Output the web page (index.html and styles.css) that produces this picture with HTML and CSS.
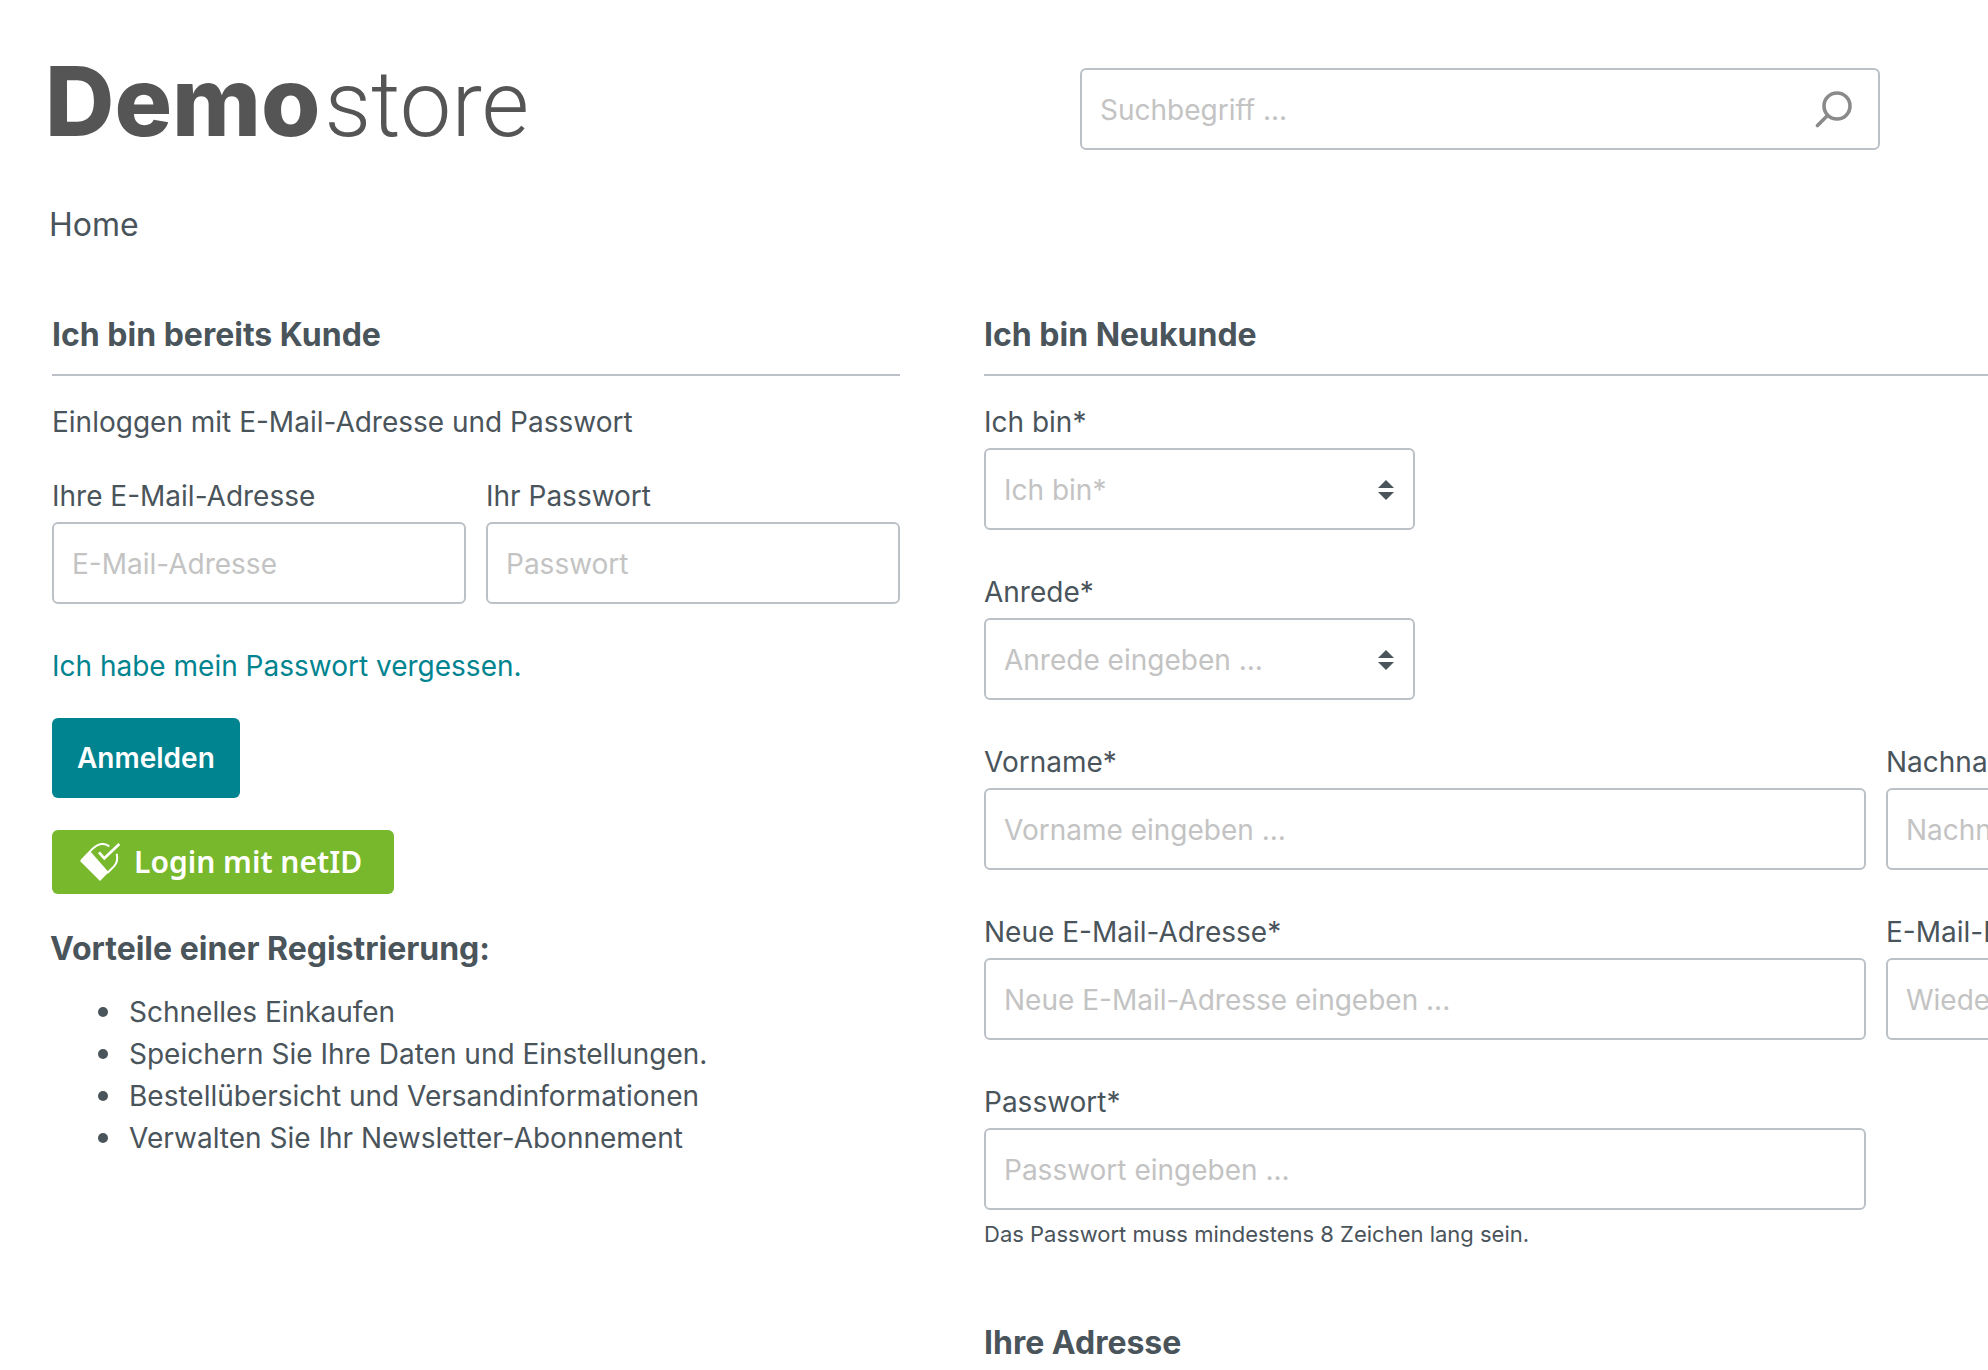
FILE: index.html
```html
<!DOCTYPE html>
<html lang="de">
<head>
<meta charset="utf-8">
<title>Demostore</title>
<link rel="stylesheet" href="styles.css">
</head>
<body>
<div class="page">
  <header class="header">
    <a class="logo" href="#" aria-label="Demostore"><span class="logo-strong">Demo</span><span class="logo-light">store</span></a>
    <form class="search" role="search">
      <input class="input" type="search" placeholder="Suchbegriff ..." aria-label="Suchbegriff">
      <button class="search-button" type="submit" aria-label="Suchen">
        <svg width="40" height="40" viewBox="0 0 40 40" fill="none" stroke="#8a8a8a" stroke-width="3.6" stroke-linecap="round"><circle cx="22" cy="16" r="13"/><path d="M12.5 25.5 2.5 35.5"/></svg>
      </button>
    </form>
  </header>
  <nav class="nav"><a href="#">Home</a></nav>
  <main class="content">
    <section>
      <h2 class="title">Ich bin bereits Kunde</h2>
      <form>
        <p class="intro">Einloggen mit E-Mail-Adresse und Passwort</p>
        <div class="row row-2">
          <div class="field">
            <label for="login-mail">Ihre E-Mail-Adresse</label>
            <input class="input" id="login-mail" type="email" placeholder="E-Mail-Adresse">
          </div>
          <div class="field">
            <label for="login-password">Ihr Passwort</label>
            <input class="input" id="login-password" type="password" placeholder="Passwort">
          </div>
        </div>
        <a class="forgot" href="#">Ich habe mein Passwort vergessen.</a>
        <button class="button" type="submit">Anmelden</button>
        <button class="netid" type="button">
          <svg width="40" height="38" viewBox="60 39 120 114" fill="none" stroke="#fff">
            <path fill="#fff" stroke="none" d="M60 93 90 63 146 127 120 153Z"/>
            <path stroke-width="6" d="M64 91 98 56Q124 32 148 49"/>
            <path stroke-width="6" d="M170 71Q176 94 162 109L142 129"/>
            <path stroke-width="8" d="M117 67 133 85 178 42"/>
          </svg>
          <span>Login mit netID</span>
        </button>
      </form>
      <h2 class="benefits-title">Vorteile einer Registrierung:</h2>
      <ul class="benefits">
        <li>Schnelles Einkaufen</li>
        <li>Speichern Sie Ihre Daten und Einstellungen.</li>
        <li>Bestellübersicht und Versandinformationen</li>
        <li>Verwalten Sie Ihr Newsletter-Abonnement</li>
      </ul>
    </section>
    <section>
      <h2 class="title">Ich bin Neukunde</h2>
      <form class="register">
        <div class="row row-4">
          <div class="field">
            <label for="account-type">Ich bin*</label>
            <div class="select">
              <select class="input" id="account-type"><option>Ich bin*</option></select>
              <svg class="arrows" width="16" height="20" viewBox="0 0 16 20" fill="#4a545b"><path d="M0 8 8 0 16 8ZM0 12H16L8 20Z"/></svg>
            </div>
          </div>
        </div>
        <div class="row row-4">
          <div class="field">
            <label for="salutation">Anrede*</label>
            <div class="select">
              <select class="input" id="salutation"><option>Anrede eingeben ...</option></select>
              <svg class="arrows" width="16" height="20" viewBox="0 0 16 20" fill="#4a545b"><path d="M0 8 8 0 16 8ZM0 12H16L8 20Z"/></svg>
            </div>
          </div>
        </div>
        <div class="row row-2">
          <div class="field">
            <label for="first-name">Vorname*</label>
            <input class="input" id="first-name" type="text" placeholder="Vorname eingeben ...">
          </div>
          <div class="field">
            <label for="last-name">Nachname*</label>
            <input class="input" id="last-name" type="text" placeholder="Nachname eingeben ...">
          </div>
        </div>
        <div class="row row-2">
          <div class="field">
            <label for="new-mail">Neue E-Mail-Adresse*</label>
            <input class="input" id="new-mail" type="email" placeholder="Neue E-Mail-Adresse eingeben ...">
          </div>
          <div class="field">
            <label for="confirm-mail">E-Mail-Bestätigung*</label>
            <input class="input" id="confirm-mail" type="email" placeholder="Wiederholen Sie die E-Mail-Adresse ...">
          </div>
        </div>
        <div class="row row-2">
          <div class="field">
            <label for="new-password">Passwort*</label>
            <input class="input" id="new-password" type="password" placeholder="Passwort eingeben ..." aria-describedby="password-hint">
            <small class="hint" id="password-hint">Das Passwort muss mindestens 8 Zeichen lang sein.</small>
          </div>
        </div>
      </form>
      <h2 class="title title-address">Ihre Adresse</h2>
    </section>
  </main>
</div>
</body>
</html>
```
FILE: styles.css
```css
* { box-sizing: border-box; }

body {
  margin: 0;
  background: #fff;
  color: #4a545b;
  font: 400 28px/42px Inter, "Liberation Sans", sans-serif;
  overflow: hidden;
}

h2, p, ul { margin: 0; }
a { color: inherit; text-decoration: none; }
button, input, select { font: inherit; }

/* Wide shop container: two columns that run past narrower windows */
.page {
  min-width: 2768px;
  padding-left: 51px;
}

.header {
  display: flex;
  align-items: flex-start;
  padding-top: 66px;
}

.logo {
  display: flex;
  width: 480px;
  height: 70px;
  margin: 0 549px 0 -6px;
  gap: 4px;
  align-items: baseline;
  color: #555;
  font-size: 96px;
  line-height: 70px;
}
.logo-strong { font-weight: 800; }
.logo-light { font-family: Roboto, sans-serif; font-size: 92px; font-weight: 300; }

.search {
  position: relative;
  width: 800px;
  margin: 2px 0 0 6px;
}
.search-button {
  position: absolute;
  top: 22px;
  right: 25px;
  padding: 0;
  border: 0;
  background: none;
  line-height: 0;
}

.nav {
  padding: 54px 0 68px;
  margin-left: -2px;
  font-size: 32px;
}

.content {
  display: grid;
  grid-template-columns: 848px minmax(0, 1784px);
  column-gap: 84px;
  align-items: start;
  margin-left: 1px;
}

.title {
  padding-bottom: 18px;
  margin-bottom: 25px;
  border-bottom: 2px solid #bcc1c7;
  font-size: 32px;
  font-weight: 700;
}
.title-address { margin-top: 72px; }

.intro { margin-bottom: 32px; }

.row { display: grid; gap: 20px; }
.row-2 { grid-template-columns: 1fr 1fr; }
.row-4 { grid-template-columns: repeat(4, 1fr); }

.register { display: grid; gap: 41px; }

.field label { display: block; margin-bottom: 5px; }

.input {
  display: block;
  width: 100%;
  height: 82px;
  margin: 0;
  padding: 2px 18px 0;
  border: 2px solid #bcc1c7;
  border-radius: 6px;
  background: #fff;
  color: #4a545b;
  appearance: none;
}
.input::placeholder { color: #c3c3c3; opacity: 1; }

.select { position: relative; }
.select .input { color: #c3c3c3; }
.arrows {
  position: absolute;
  top: 32px;
  right: 21px;
  pointer-events: none;
}

.hint {
  display: block;
  margin-top: 8px;
  font-size: 22px;
  line-height: 32px;
}

.forgot {
  display: block;
  margin: 41px 0 31px;
  color: #008490;
}

.button, .netid {
  display: flex;
  align-items: center;
  border: 0;
  border-radius: 6px;
  color: #fff;
  font-weight: 600;
}
.button {
  height: 80px;
  padding: 0 25px;
  background: #008490;
}
.netid {
  height: 64px;
  margin-top: 32px;
  padding: 0 32px 0 28px;
  gap: 14px;
  background: #77b82c;
  font-family: "Noto Sans", sans-serif;
  font-size: 30px;
}

.benefits-title {
  margin: 34px 0 21px -2px;
  font-size: 32px;
  font-weight: 700;
}

.benefits {
  padding-left: 46px;
  list-style: none;
}
.benefits li {
  display: flex;
  align-items: center;
  gap: 21px;
}
.benefits li::before {
  content: "";
  width: 10px;
  height: 10px;
  border-radius: 50%;
  background: #4a545b;
}
```
